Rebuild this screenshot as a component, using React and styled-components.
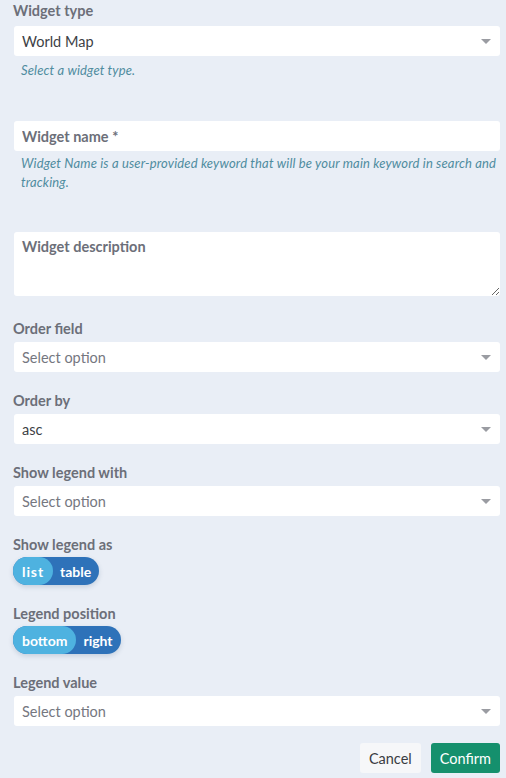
import styled, {createGlobalStyle} from "styled-components";

const GlobalStyle = createGlobalStyle`
  html, body {
    margin: 0;
    padding: 0;
    background: #e9eef6;
  }
  body {
    font-family: Lato, "Open Sans", sans-serif;
  }
`

const Form = styled.div`
  width: 506px;
  height: 778px;
  box-sizing: border-box;
  padding: 2px 6px 0 13px;
  display: flex;
  flex-direction: column;
  background: #e9eef6;
`
const Field = styled.div`
  display: flex;
  flex-direction: column;
  margin-top: ${props => props.top || 0}px;
`
const Label = styled.div`
  font-size: 14.5px;
  font-weight: 700;
  line-height: 18px;
  color: #6c6f79;
  margin-bottom: ${props => props.gap || 4}px;
`
const SelectBox = styled.div`
  margin-left: 1px;
  height: 30px;
  background: #fff;
  border-radius: 3px;
  display: flex;
  align-items: center;
  justify-content: space-between;
  padding: 0 8px;
  box-sizing: border-box;
  font-size: 14.5px;
  color: ${props => props.placeholder ? "#75777f" : "#3d3f45"};
`
const Caret = styled.span`
  width: 0;
  height: 0;
  border-left: 5px solid transparent;
  border-right: 5px solid transparent;
  border-top: 5px solid #9a9ca2;
  margin-right: 1px;
`
const TextInput = styled.input`
  margin-left: 1px;
  height: 30px;
  border: none;
  outline: none;
  background: #fff;
  border-radius: 3px;
  padding: 0 8px;
  box-sizing: border-box;
  font-family: inherit;
  font-size: 14.5px;

  &::placeholder {
    color: #6c6f79;
    font-weight: 700;
  }
`
const TextArea = styled.textarea`
  margin-left: 1px;
  height: 64px;
  border: none;
  outline: none;
  background: #fff;
  border-radius: 3px;
  padding: 6px 8px;
  box-sizing: border-box;
  font-family: inherit;
  font-size: 14.5px;
  resize: vertical;

  &::placeholder {
    color: #6c6f79;
    font-weight: 700;
  }
`
const Help = styled.div`
  margin: ${props => props.top || 5}px 0 0 8px;
  font-size: 13px;
  font-style: italic;
  letter-spacing: 0.15px;
  line-height: 19px;
  color: #4f8c9f;
`
const Toggle = styled.div`
  display: inline-flex;
  align-self: flex-start;
  height: 28px;
  border-radius: 14px;
  background: #2e72b9;
  box-shadow: 0 2px 5px rgba(40, 70, 110, 0.18);
`
const Option = styled.span`
  display: flex;
  align-items: center;
  padding: 0 ${props => props.active ? 9 : 8}px 0 ${props => props.active ? 9 : 7}px;
  border-radius: 14px;
  background: ${props => props.active ? "#4eb2e0" : "transparent"};
  color: #fff;
  font-size: 14px;
  font-weight: 700;
  letter-spacing: ${props => props.wide ? "0.9px" : "0"};
`
const Actions = styled.div`
  display: flex;
  justify-content: flex-end;
  gap: 10px;
  margin-top: 17px;
`
const Button = styled.button`
  height: 30px;
  border: none;
  border-radius: 3px;
  padding: 0 9px;
  font-family: inherit;
  font-size: 14.5px;
  background: ${props => props.primary ? "#15906d" : "#f6f7f9"};
  color: ${props => props.primary ? "#fff" : "#3a3c42"};
`

const Select = ({value, placeholder}) => (
    <SelectBox placeholder={placeholder ? 1 : undefined}>
        <span>{value || placeholder}</span>
        <Caret/>
    </SelectBox>
)

const App = () => {
    return (
        <Form>
            <GlobalStyle/>
            <Field>
                <Label gap={6}>Widget type</Label>
                <Select value="World Map"/>
                <Help>Select a widget type.</Help>
            </Field>
            <Field top={41}>
                <TextInput placeholder="Widget name *"/>
                <Help top={3}>
                    Widget Name is a user-provided keyword that will be your main keyword in search and tracking.
                </Help>
            </Field>
            <Field top={40}>
                <TextArea placeholder="Widget description"/>
            </Field>
            <Field top={24}>
                <Label>Order field</Label>
                <Select placeholder="Select option"/>
            </Field>
            <Field top={20}>
                <Label>Order by</Label>
                <Select value="asc"/>
            </Field>
            <Field top={20}>
                <Label>Show legend with</Label>
                <Select placeholder="Select option"/>
            </Field>
            <Field top={20}>
                <Label gap={3}>Show legend as</Label>
                <Toggle>
                    <Option active wide>list</Option>
                    <Option>table</Option>
                </Toggle>
            </Field>
            <Field top={20}>
                <Label gap={3}>Legend position</Label>
                <Toggle>
                    <Option active>bottom</Option>
                    <Option>right</Option>
                </Toggle>
            </Field>
            <Field top={20}>
                <Label>Legend value</Label>
                <Select placeholder="Select option"/>
            </Field>
            <Actions>
                <Button>Cancel</Button>
                <Button primary>Confirm</Button>
            </Actions>
        </Form>
    )
}

export default App
